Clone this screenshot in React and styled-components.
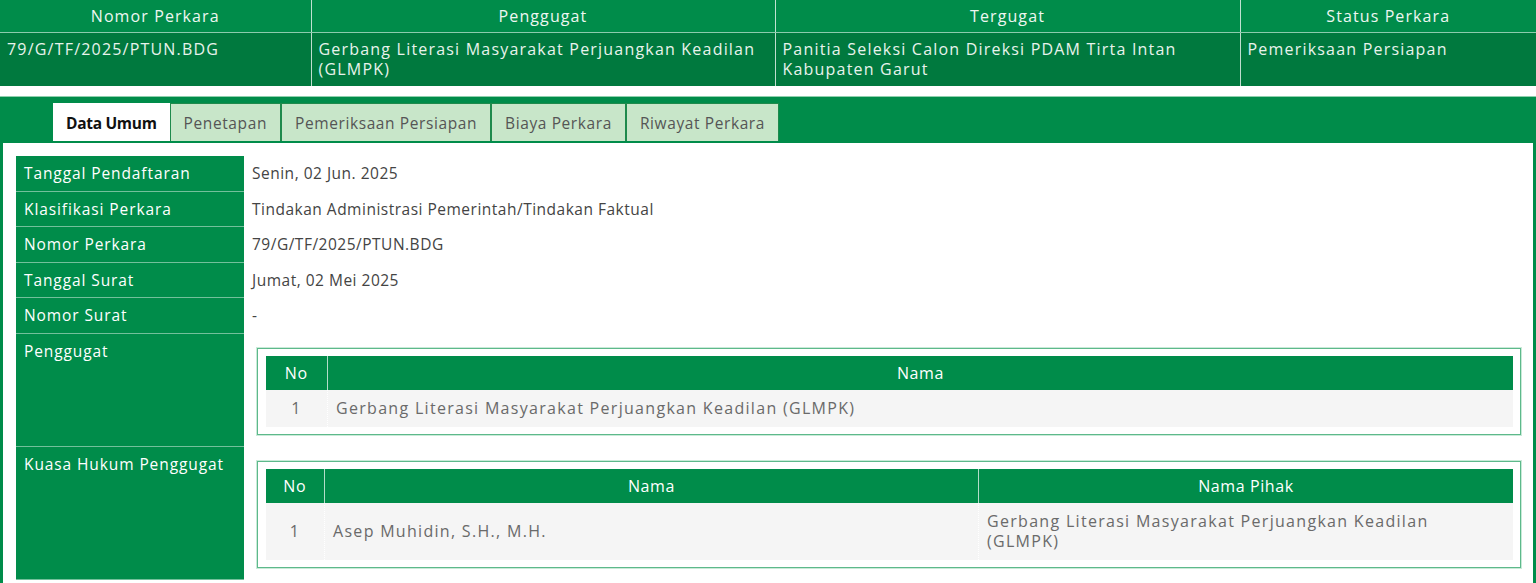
import { Fragment } from "react";
import styled, { createGlobalStyle } from "styled-components";

const GlobalStyle = createGlobalStyle`
  body {
    margin: 0;
    background: #ffffff;
    font-family: "Open Sans", "Liberation Sans", sans-serif;
    font-size: 15.5px;
  }
`;

const SummaryTable = styled.table`
  width: 100%;
  border-collapse: collapse;
  table-layout: fixed;
  font-size: 16px;
  letter-spacing: 1.2px;
`;

const SummaryHead = styled.th`
  background: #008c4a;
  color: #eef7f1;
  font-weight: 400;
  text-align: center;
  line-height: 20px;
  padding: 6px 7px 6px;
  letter-spacing: 1.1px;
  border-left: 1px solid rgba(255, 255, 255, 0.75);
  border-bottom: 1px solid rgba(255, 255, 255, 0.55);

  &:first-child {
    border-left: none;
  }
`;

const SummaryCell = styled.td`
  background: #00793e;
  color: #e8f3ec;
  line-height: 20px;
  vertical-align: top;
  padding: 6px 7px 7px;
  border-left: 1px solid rgba(255, 255, 255, 0.75);

  &:first-child {
    border-left: none;
  }
`;

const Panel = styled.div`
  margin-top: 11px;
  border: 3px solid #008c4a;
  border-top: 2px solid #008c4a;
  box-shadow: 0 -1px 0 #8fcfad;
`;

const TabBar = styled.div`
  display: flex;
  align-items: flex-end;
  background: #008c4a;
  padding: 4px 0 0 50px;
  border-bottom: 2px solid #008c4a;
`;

const Tab = styled.div`
  height: 38px;
  line-height: 38px;
  padding: 0 ${(p) => (p.$active ? "12px" : "13px")};
  background: ${(p) => (p.$active ? "#ffffff" : "#c8e6c9")};
  color: ${(p) => (p.$active ? "#111111" : "#555555")};
  font-weight: ${(p) => (p.$active ? 700 : 400)};
  letter-spacing: ${(p) => (p.$active ? "-0.3px" : "0.6px")};
  border: 1px solid ${(p) => (p.$active ? "#ffffff" : "#1f8a4c")};
  border-bottom: none;
  box-sizing: border-box;
`;

const Content = styled.div`
  padding: 13px 12px 13px 13px;
`;

const InfoGrid = styled.div`
  display: grid;
  grid-template-columns: 228px 1fr;
`;

const Label = styled.div`
  background: #008c4a;
  color: #ffffff;
  padding: 7px 8px;
  line-height: 20.5px;
  letter-spacing: 0.9px;
  border-bottom: 1px solid rgba(255, 255, 255, 0.45);
`;

const Value = styled.div`
  color: #444444;
  padding: 7px 8px;
  line-height: 20.5px;
  letter-spacing: 0.5px;
`;

const NestedValue = styled.div`
  padding: 14px 0 12px 13px;
`;

const Box = styled.div`
  border: 1px solid #5db98b;
  box-shadow: 0 0 0 1px #c9ead8;
  padding: 7px;
`;

const InnerTable = styled.table`
  width: 100%;
  border-collapse: collapse;
  table-layout: fixed;
  font-size: 16px;
`;

const InnerHead = styled.th`
  box-sizing: border-box;
  background: #008c4a;
  color: #ffffff;
  font-weight: 400;
  text-align: center;
  height: 34px;
  padding: 0 8px;
  letter-spacing: 0.6px;
  border-left: 1px solid rgba(255, 255, 255, 0.7);
  width: ${(p) => p.$w || "auto"};

  &:first-child {
    border-left: none;
  }
`;

const InnerCell = styled.td`
  background: #f5f5f5;
  color: #6a6a6a;
  line-height: 20px;
  letter-spacing: 1.3px;
  padding: 8px 24px 9px 8px;
  text-align: ${(p) => (p.$center ? "center" : "left")};
  border-left: 1px dotted #ffffff;

  &:first-child {
    padding: 8px;
  }
`;

const tabs = [
  "Data Umum",
  "Penetapan",
  "Pemeriksaan Persiapan",
  "Biaya Perkara",
  "Riwayat Perkara",
];

const info = [
  ["Tanggal Pendaftaran", "Senin, 02 Jun. 2025"],
  ["Klasifikasi Perkara", "Tindakan Administrasi Pemerintah/Tindakan Faktual"],
  ["Nomor Perkara", "79/G/TF/2025/PTUN.BDG"],
  ["Tanggal Surat", "Jumat, 02 Mei 2025"],
  ["Nomor Surat", "-"],
];

const App = () => {
  return (
    <>
      <GlobalStyle />
      <SummaryTable>
        <colgroup>
          <col style={{ width: "311px" }} />
          <col style={{ width: "464px" }} />
          <col style={{ width: "465px" }} />
          <col />
        </colgroup>
        <thead>
          <tr>
            <SummaryHead>Nomor Perkara</SummaryHead>
            <SummaryHead>Penggugat</SummaryHead>
            <SummaryHead>Tergugat</SummaryHead>
            <SummaryHead>Status Perkara</SummaryHead>
          </tr>
        </thead>
        <tbody>
          <tr>
            <SummaryCell>79/G/TF/2025/PTUN.BDG</SummaryCell>
            <SummaryCell>Gerbang Literasi Masyarakat Perjuangkan Keadilan (GLMPK)</SummaryCell>
            <SummaryCell>Panitia Seleksi Calon Direksi PDAM Tirta Intan Kabupaten Garut</SummaryCell>
            <SummaryCell>Pemeriksaan Persiapan</SummaryCell>
          </tr>
        </tbody>
      </SummaryTable>

      <Panel>
        <TabBar>
          {tabs.map((t, i) => (
            <Tab key={t} $active={i === 0}>
              {t}
            </Tab>
          ))}
        </TabBar>

        <Content>
          <InfoGrid>
            {info.map(([k, v]) => (
              <Fragment key={k}>
                <Label>{k}</Label>
                <Value>{v}</Value>
              </Fragment>
            ))}

            <Label>Penggugat</Label>
            <NestedValue>
              <Box>
                <InnerTable>
                  <thead>
                    <tr>
                      <InnerHead $w="62px">No</InnerHead>
                      <InnerHead>Nama</InnerHead>
                    </tr>
                  </thead>
                  <tbody>
                    <tr>
                      <InnerCell $center>1</InnerCell>
                      <InnerCell>Gerbang Literasi Masyarakat Perjuangkan Keadilan (GLMPK)</InnerCell>
                    </tr>
                  </tbody>
                </InnerTable>
              </Box>
            </NestedValue>

            <Label>Kuasa Hukum Penggugat</Label>
            <NestedValue>
              <Box>
                <InnerTable>
                  <thead>
                    <tr>
                      <InnerHead $w="59px">No</InnerHead>
                      <InnerHead $w="654px">Nama</InnerHead>
                      <InnerHead>Nama Pihak</InnerHead>
                    </tr>
                  </thead>
                  <tbody>
                    <tr>
                      <InnerCell $center>1</InnerCell>
                      <InnerCell>Asep Muhidin, S.H., M.H.</InnerCell>
                      <InnerCell>Gerbang Literasi Masyarakat Perjuangkan Keadilan (GLMPK)</InnerCell>
                    </tr>
                  </tbody>
                </InnerTable>
              </Box>
            </NestedValue>
          </InfoGrid>
        </Content>
      </Panel>
    </>
  );
};

export default App;
